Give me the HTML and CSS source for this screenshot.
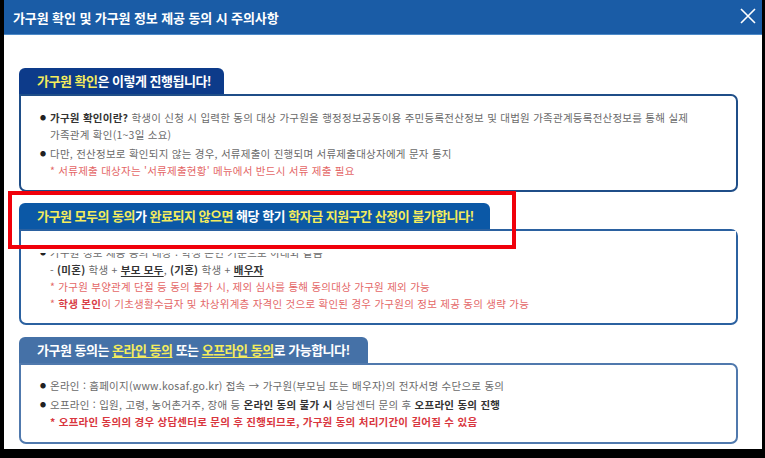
FILE: index.html
```html
<!DOCTYPE html>
<html lang="ko">
<head>
<meta charset="utf-8">
<title>가구원 확인 및 가구원 정보 제공 동의 시 주의사항</title>
<link rel="stylesheet" href="styles.css">
</head>
<body>
<div class="frame">
  <div class="header">
    <h1 class="title">가구원 확인 및 가구원 정보 제공 동의 시 주의사항</h1>
    <svg class="close" width="16" height="16" viewBox="0 0 16 16"><path d="M1 1 L15 15 M15 1 L1 15" stroke="#fff" stroke-width="1.6" fill="none"/></svg>
  </div>
  <div class="content">
    <section class="sec sec1">
      <div class="tab tab1"><span class="yl">가구원 확인</span>은 이렇게 진행됩니다!</div>
      <div class="box box1">
        <p class="li"><span class="dot">●</span><b>가구원 확인이란?</b> 학생이 신청 시 입력한 동의 대상 가구원을 행정정보공동이용 주민등록전산정보 및 대법원 가족관계등록전산정보를 통해 실제<br>가족관계 확인(1~3일 소요)</p>
        <p class="li"><span class="dot">●</span>다만, 전산정보로 확인되지 않는 경우, 서류제출이 진행되며 서류제출대상자에게 문자 통지</p>
        <p class="note">* 서류제출 대상자는 '서류제출현황' 메뉴에서 반드시 서류 제출 필요</p>
      </div>
    </section>
    <section class="sec sec2">
      <div class="tab tab2"><span class="yl">가구원 모두의 동의</span>가 <span class="yl">완료되지 않으면</span> 해당 학기 <span class="yl">학자금 지원구간 산정이 불가합니다!</span></div>
      <div class="box box2">
        <p class="li"><span class="dot">●</span>가구원 정보 제공 동의 대상 : 학생 본인 기준으로 아래와 같음</p>
        <p class="sub">- <b>(미혼)</b> 학생 + <b class="ul">부모 모두</b>, <b>(기혼)</b> 학생 + <b class="ul">배우자</b></p>
        <p class="note">* 가구원 부양관계 단절 등 동의 불가 시, 제외 심사를 통해 동의대상 가구원 제외 가능</p>
        <p class="note">* <b>학생 본인</b>이 기초생활수급자 및 차상위계층 자격인 것으로 확인된 경우 가구원의 정보 제공 동의 생략 가능</p>
        <div class="cover"></div>
      </div>
      <div class="highlight"></div>
    </section>
    <section class="sec sec3">
      <div class="tab tab3">가구원 동의는 <span class="yl ul">온라인 동의</span> 또는 <span class="yl ul">오프라인 동의</span>로 가능합니다!</div>
      <div class="box box3">
        <p class="li"><span class="dot">●</span>온라인 : 홈페이지(www.kosaf.go.kr) 접속 → 가구원(부모님 또는 배우자)의 전자서명 수단으로 동의</p>
        <p class="li"><span class="dot">●</span>오프라인 : 입원, 고령, 농어촌거주, 장애 등 <b>온라인 동의 불가 시</b> 상담센터 문의 후 <b>오프라인 동의 진행</b></p>
        <p class="note strong">* 오프라인 동의의 경우 상담센터로 문의 후 진행되므로, 가구원 동의 처리기간이 길어질 수 있음</p>
      </div>
    </section>
  </div>
</div>
</body>
</html>
```

FILE: styles.css
```css
* { box-sizing: border-box; }
html, body {
  margin: 0;
  padding: 0;
  background: #000;
  width: 765px;
  height: 458px;
  overflow: hidden;
  font-family: "Noto Sans CJK KR", "Noto Sans", sans-serif;
}
.frame {
  margin: 0 3px 0 4px;
  width: 758px;
  height: 449px;
  background: #fff;
}
.header {
  height: 35px;
  background: #1a5ca6;
  border-bottom: 1px solid #4d8ac8;
  display: flex;
  align-items: center;
  justify-content: space-between;
  padding: 0 6px 0 9px;
}
.title {
  margin: 0;
  font-size: 13px;
  font-weight: 700;
  color: #fff;
  letter-spacing: -0.1px;
}
.close { display: block; margin-top: -2px; margin-right: 0; }
.content {
  padding: 33px 24px 0 15px;
}
.sec { position: relative; }
.sec2 { margin-top: 11px; }
.sec3 { margin-top: 12px; }
.tab {
  display: inline-block;
  height: 26px;
  line-height: 26px;
  padding: 0 16px 0 18px;
  border-radius: 6px 6px 0 0;
  color: #fff;
  font-size: 13px;
  font-weight: 700;
  letter-spacing: -0.5px;
  vertical-align: top;
}
.tab1 { background: #0d3b8a; padding-right: 13px; }
.tab2 { background: #0b58a6; }
.tab3 { background: #4571a7; padding-right: 18px; }
.yl { color: #f4ec5c; }
.ul { text-decoration: underline; text-underline-offset: 2px; }
.box {
  position: relative;
  border: 2px solid #1f4e88;
  border-radius: 0 7px 7px 7px;
  padding: 13px 10px 0 19px;
}
.box1 { height: 98px; }
.box2 { height: 96px; border-color: #2b61a0; }
.box3 { height: 81px; border-color: #5079ad; padding-top: 12px; }
p {
  margin: 0;
  font-size: 10.5px;
  line-height: 17px;
  color: #6a6a6a;
  letter-spacing: 0.25px;
  white-space: nowrap;
}
p b { color: #333; }
.li { position: relative; padding-left: 10px; }
.li + .li { margin-top: 2px; }
.dot {
  position: absolute;
  left: 0;
  top: 0;
  font-size: 6px;
  color: #222;
}
.sub { padding-left: 10px; }
.note { padding-left: 10px; color: #e46767; }
.note b { color: #d94048; }
.note.strong { color: #d9363e; font-weight: 700; }
.cover {
  position: absolute;
  left: 0;
  right: 0;
  top: 0;
  height: 22px;
  background: #fff;
}
.highlight {
  position: absolute;
  left: -11px;
  top: -12px;
  width: 508px;
  height: 58px;
  border: 4px solid #f0000a;
  pointer-events: none;
}
```
